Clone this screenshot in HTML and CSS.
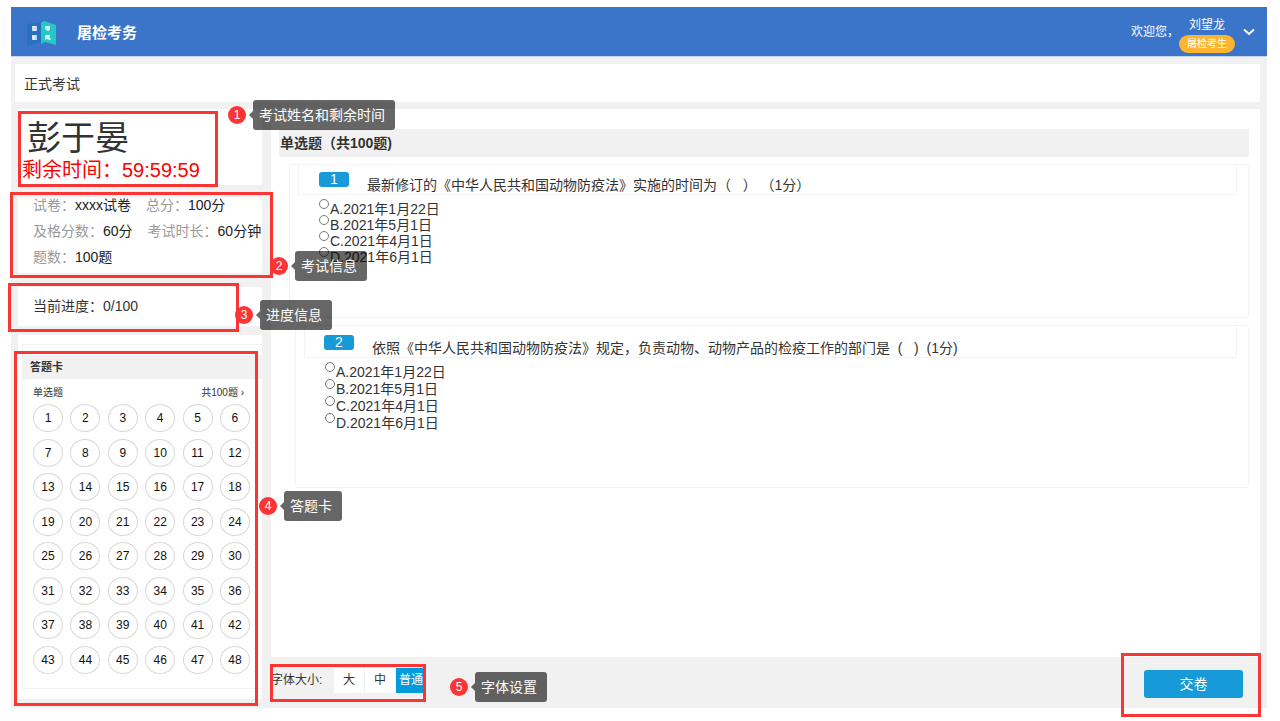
FILE: index.html
```html
<!DOCTYPE html>
<html lang="zh-CN">
<head>
<meta charset="utf-8">
<title>屠检考务</title>
<link rel="stylesheet" href="styles.css">
</head>
<body>
<div class="page">
  <header class="topbar">
    <svg class="logo" viewBox="0 0 30 26" aria-hidden="true">
      <path fill="#2a6fc2" d="M0 3 14 1v20L0 25z"/>
      <path fill="#25c8c4" d="M14 2 17 0l12 4v20l-11-3-4 2z"/>
      <path fill="#b9d6f2" d="M5 5h5v5H5zM5 14h5v5H5z"/>
      <path fill="#b4f0ee" d="M18 5h5v3l-1 2h-2l-2-2zM18 14h5v3l1 2h-2l-2-1-2 1z"/>
      <path fill="none" stroke="#fff" d="M5 6h4M6 9h3M7 14v5M5 16h2M18 6h5M20 8h2M19 15h3M20 17h2"/>
    </svg>
    <h1 class="brand">屠检考务</h1>
    <span class="welcome">欢迎您，</span>
    <div class="user">
      <span class="user-name">刘望龙</span>
      <span class="user-role">屠检考生</span>
    </div>
    <button class="menu-toggle" type="button" aria-label="用户菜单">
      <svg viewBox="0 0 12 8" aria-hidden="true"><path fill="none" stroke="#fff" stroke-width="2" d="M1 1.500 6 6l5-4.500"/></svg>
    </button>
  </header>

  <div class="page-title">正式考试</div>

  <div class="body">
    <aside class="side">
      <section class="panel candidate">
        <div class="candidate-name">彭于晏</div>
        <div class="countdown">剩余时间：59:59:59</div>
      </section>
      <section class="panel info">
        <div class="info-row"><span><i>试卷：</i>xxxx试卷</span><span><i>总分：</i>100分</span></div>
        <div class="info-row"><span><i>及格分数：</i>60分</span><span><i>考试时长：</i>60分钟</span></div>
        <div class="info-row"><span><i>题数：</i>100题</span></div>
      </section>
      <section class="panel progress">当前进度：0/100</section>
      <section class="panel sheet">
        <div class="sheet-box">
          <h2 class="sheet-title">答题卡</h2>
          <div class="sheet-head"><span>单选题</span><span>共100题 ›</span></div>
          <div class="sheet-grid">
            <button type="button">1</button><button type="button">2</button><button type="button">3</button><button type="button">4</button><button type="button">5</button><button type="button">6</button>
            <button type="button">7</button><button type="button">8</button><button type="button">9</button><button type="button">10</button><button type="button">11</button><button type="button">12</button>
            <button type="button">13</button><button type="button">14</button><button type="button">15</button><button type="button">16</button><button type="button">17</button><button type="button">18</button>
            <button type="button">19</button><button type="button">20</button><button type="button">21</button><button type="button">22</button><button type="button">23</button><button type="button">24</button>
            <button type="button">25</button><button type="button">26</button><button type="button">27</button><button type="button">28</button><button type="button">29</button><button type="button">30</button>
            <button type="button">31</button><button type="button">32</button><button type="button">33</button><button type="button">34</button><button type="button">35</button><button type="button">36</button>
            <button type="button">37</button><button type="button">38</button><button type="button">39</button><button type="button">40</button><button type="button">41</button><button type="button">42</button>
            <button type="button">43</button><button type="button">44</button><button type="button">45</button><button type="button">46</button><button type="button">47</button><button type="button">48</button>
          </div>
        </div>
      </section>
    </aside>

    <div class="content">
      <main class="questions">
        <h2 class="section-title">单选题（共100题)</h2>
        <section class="question">
          <div class="question-head">
            <span class="question-no">1</span>
            <span class="question-text">最新修订的《中华人民共和国动物防疫法》实施的时间为（&nbsp;&nbsp;&nbsp;）&nbsp;（1分）</span>
          </div>
          <div class="options">
            <label><input type="radio" name="q1">A.2021年1月22日</label>
            <label><input type="radio" name="q1">B.2021年5月1日</label>
            <label><input type="radio" name="q1">C.2021年4月1日</label>
            <label><input type="radio" name="q1">D.2021年6月1日</label>
          </div>
        </section>
        <section class="question question-inset">
          <div class="question-head">
            <span class="question-no">2</span>
            <span class="question-text">依照《中华人民共和国动物防疫法》规定，负责动物、动物产品的检疫工作的部门是&nbsp;&nbsp;(&nbsp;&nbsp;&nbsp;)&nbsp;&nbsp;(1分)</span>
          </div>
          <div class="options">
            <label><input type="radio" name="q2">A.2021年1月22日</label>
            <label><input type="radio" name="q2">B.2021年5月1日</label>
            <label><input type="radio" name="q2">C.2021年4月1日</label>
            <label><input type="radio" name="q2">D.2021年6月1日</label>
          </div>
        </section>
      </main>
      <footer class="actions">
        <span class="size-label">字体大小:</span>
        <div class="sizes">
          <button type="button">大</button>
          <button type="button">中</button>
          <button type="button" class="active">普通</button>
        </div>
        <button class="submit" type="button">交卷</button>
      </footer>
    </div>
  </div>
</div>

<div class="frame frame-candidate"></div>
<div class="frame frame-info"></div>
<div class="frame frame-progress"></div>
<div class="frame frame-sheet"></div>
<div class="frame frame-sizes"></div>
<div class="frame frame-submit"></div>

<div class="note note-candidate"><b>1</b><span>考试姓名和剩余时间</span></div>
<div class="note note-info"><b>2</b><span>考试信息</span></div>
<div class="note note-progress"><b>3</b><span>进度信息</span></div>
<div class="note note-sheet"><b>4</b><span>答题卡</span></div>
<div class="note note-sizes"><b>5</b><span>字体设置</span></div>
</body>
</html>
```
FILE: styles.css
```css
* {
  box-sizing: border-box;
}

body {
  margin: 0;
  position: relative;
  min-height: 100vh;
  padding: 7px 13px 13px 11px;
  display: flex;
  background: #fff;
  color: #333;
  font: 14px/16px "Liberation Sans", "Noto Sans CJK SC", sans-serif;
}

button {
  margin: 0;
  padding: 0;
  border: 0;
  font: inherit;
  color: inherit;
  cursor: pointer;
}

h1,
h2 {
  margin: 0;
}

.page {
  flex: 1;
  min-width: 0;
  display: flex;
  flex-direction: column;
  background: #f1f1f1;
}

/* Top bar */
.topbar {
  height: 50px;
  padding: 0 12px 0 16px;
  display: flex;
  align-items: center;
  background: #3b75c9;
  border-bottom: 1px solid #c5d5ec;
  color: #fff;
}

.logo {
  width: 30px;
  height: 26px;
  margin-top: 4px;
}

.brand {
  margin-left: 20px;
  padding-top: 2px;
  font-size: 15px;
  line-height: 20px;
}

.welcome {
  margin-left: auto;
  font-size: 12px;
}

.user {
  display: flex;
  flex-direction: column;
  align-items: center;
  gap: 2px;
  padding-top: 6px;
  font-size: 12px;
}

.user-role {
  padding: 0 8px;
  border-radius: 9px;
  background: #fdb530;
  font-size: 10px;
  line-height: 18px;
}

.menu-toggle {
  width: 12px;
  height: 16px;
  margin-left: 8px;
  background: none;
  line-height: 0;
}

.menu-toggle svg {
  width: 12px;
  height: 8px;
}

.page-title {
  margin: 7px 7px 7px 4px;
  padding: 12px 9px 10px;
  background: #fff;
}

.body {
  flex: 1;
  display: flex;
}

/* Left column */
.side {
  width: 260px;
  flex: none;
  padding: 0 9px 9px 7px;
  display: flex;
  flex-direction: column;
}

.panel {
  background: #fff;
}

.candidate {
  padding: 9px 4px 3px;
  margin-bottom: 12px;
}

.candidate-name {
  padding-left: 5px;
  font-size: 34px;
  line-height: 40px;
}

.countdown {
  color: #f00;
  font-size: 20px;
  line-height: 24px;
}

.info {
  display: flex;
  flex-direction: column;
  gap: 10px;
  padding: 0 0 8px 15px;
  margin-bottom: 14px;
  color: #222;
}

.info-row {
  display: flex;
  gap: 15px;
  white-space: nowrap;
}

.info i {
  font-style: normal;
  color: #999;
}

.progress {
  padding: 11px 15px 12px;
  margin-bottom: 9px;
}

.sheet {
  flex: 1;
  display: flex;
  padding: 9px 0 10px 4px;
}

.sheet-box {
  flex: 1;
  display: flex;
  flex-direction: column;
  padding: 10px 0 14px;
  border: 1px solid #f1f1f1;
  border-right: 0;
}

.sheet-title {
  padding: 0 7px;
  background: #f1f1f1;
  font-size: 11px;
  line-height: 24px;
}

.sheet-head {
  display: flex;
  justify-content: space-between;
  padding: 6px 18px 3px 10px;
  font-size: 10px;
}

.sheet-grid {
  flex: 1;
  display: grid;
  grid-template-columns: repeat(6, 30px);
  justify-content: space-between;
  align-content: space-between;
  padding: 0 12px 0 10px;
}

.sheet-grid button {
  height: 28px;
  border: 1px solid #d8d8d8;
  border-radius: 50%;
  background: #fff;
  color: #111;
  font-size: 12px;
}

/* Questions */
.content {
  flex: 1;
  min-width: 0;
  display: flex;
  flex-direction: column;
}

.questions {
  flex: 1;
  margin-right: 7px;
  padding: 20px 11px 20px 8px;
  background: #fff;
}

.section-title {
  padding: 1px;
  background: #f1f1f1;
  font-size: 14px;
  line-height: 26px;
}

.question {
  min-height: 154px;
  margin: 7px 0 0 10px;
  padding: 0 11px 0 8px;
  border: 1px solid #f3f3f3;
  border-radius: 3px;
}

.question-inset {
  min-height: 163px;
  margin-left: 16px;
}

.question-head {
  display: flex;
  align-items: flex-start;
  gap: 18px;
  padding: 7px 20px 0;
  border: 1px solid #f3f3f3;
  border-top: 0;
}

.question-no {
  width: 30px;
  border-radius: 3px;
  background: #179bd8;
  color: #fff;
  line-height: 15px;
  text-align: center;
}

.question-text {
  padding-top: 4px;
  line-height: 18px;
}

.question-inset .question-head {
  padding-top: 9px;
  padding-left: 19px;
}

.options {
  display: flex;
  flex-direction: column;
  padding: 6px 21px;
}

.options label {
  display: flex;
  align-items: flex-start;
}

.question-inset .options {
  gap: 1px;
}

.options input {
  appearance: none;
  width: 10px;
  height: 10px;
  margin: -2px 1px 0 0;
  border: 1px solid #777;
  border-radius: 50%;
  background: #fff;
}

/* Bottom bar */
.actions {
  height: 51px;
  padding-right: 24px;
  display: flex;
  align-items: center;
  font-size: 12px;
}

.sizes {
  display: flex;
  gap: 1px;
  margin: 0 auto 5px 0;
}

.size-label {
  width: 63px;
  margin-bottom: 5px;
}

.sizes button {
  width: 30px;
  height: 25px;
  background: #fff;
}

.sizes .active {
  background: #049bdd;
  color: #fff;
}

.submit {
  width: 99px;
  height: 28px;
  margin-top: 2px;
  border-radius: 3px;
  background: #179bd8;
  color: #fff;
  font-size: 14px;
}

/* Annotations laid over the page */
.frame {
  position: absolute;
  border: 3px solid #fb3434;
  pointer-events: none;
}

.frame-candidate { left: 18px; top: 111px; width: 200px; height: 76px; }
.frame-info { left: 10px; top: 192px; width: 263px; height: 86px; }
.frame-progress { left: 8px; top: 283px; width: 231px; height: 49px; }
.frame-sheet { left: 14px; top: 351px; width: 244px; height: 355px; }
.frame-sizes { left: 270px; top: 664px; width: 156px; height: 38px; }
.frame-submit { right: 19px; top: 653px; width: 140px; height: 64px; }

.note {
  position: absolute;
  display: flex;
  align-items: center;
  color: #fff;
}

.note b {
  width: 18px;
  border-radius: 50%;
  background: #fb3434;
  font-size: 12px;
  font-weight: 400;
  line-height: 18px;
  text-align: center;
}

.note::before {
  content: "";
  order: 1;
  border: 4px solid transparent;
  border-left: 0;
  border-right-color: rgba(0, 0, 0, 0.6);
  margin-left: 3px;
}

.note span {
  order: 2;
  padding: 0 10px 0 6px;
  border-radius: 3px;
  background: rgba(0, 0, 0, 0.6);
  line-height: 30px;
}

.note-candidate { left: 228px; top: 100px; }
.note-info { left: 270px; top: 251px; }
.note-progress { left: 235px; top: 300px; }
.note-sheet { left: 259px; top: 491px; }
.note-sizes { left: 450px; top: 672px; }
```
